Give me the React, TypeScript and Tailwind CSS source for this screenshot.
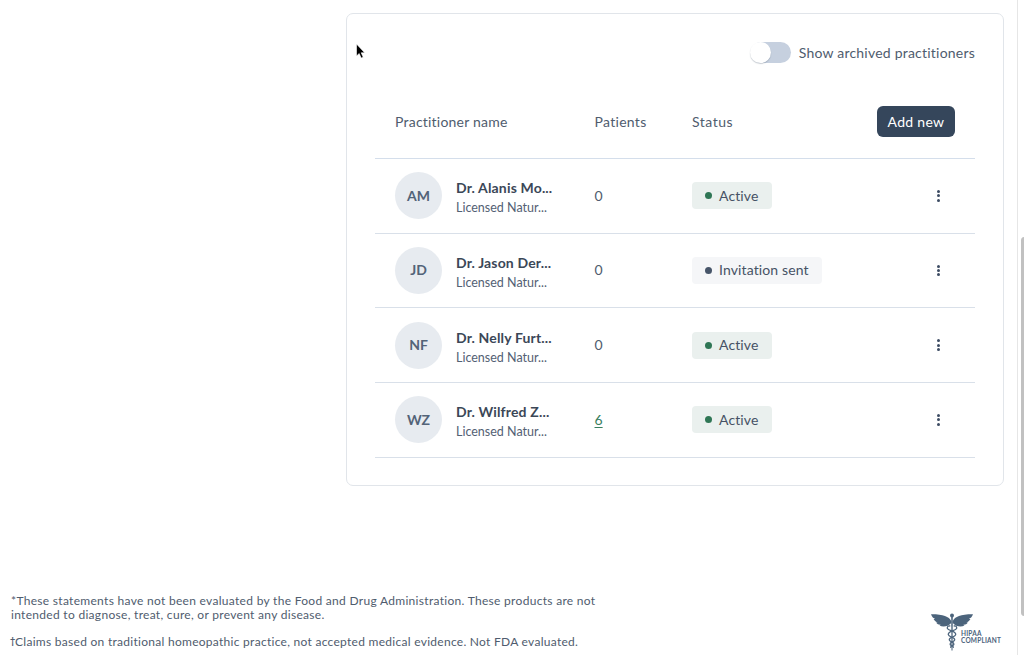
import clsx from 'clsx';

type Practitioner = {
  initials: string;
  name: string;
  title: string;
  patients: number;
  status: 'Active' | 'Invitation sent';
};

const practitioners: Practitioner[] = [
  { initials: 'AM', name: 'Dr. Alanis Mo...', title: 'Licensed Natur...', patients: 0, status: 'Active' },
  { initials: 'JD', name: 'Dr. Jason Der...', title: 'Licensed Natur...', patients: 0, status: 'Invitation sent' },
  { initials: 'NF', name: 'Dr. Nelly Furt...', title: 'Licensed Natur...', patients: 0, status: 'Active' },
  { initials: 'WZ', name: 'Dr. Wilfred Z...', title: 'Licensed Natur...', patients: 6, status: 'Active' },
];

const columns = 'grid grid-cols-[61px_138.5px_97.5px_1fr] items-center pl-[20px]';

const StatusBadge = ({ status }: { status: Practitioner['status'] }) => {
  const active = status === 'Active';

  return (
    <span
      className={clsx(
        'inline-flex h-[27px] items-center rounded-[4px] text-sm text-[#465265]',
        active ? 'w-20 bg-[#eaf0ee]' : 'w-[130px] bg-[#f5f6f8]'
      )}
    >
      <span className={clsx('ml-[13px] mr-[7px] size-[7px] rounded-full', active ? 'bg-[#2f7655]' : 'bg-[#475569]')} />
      <span className={active ? 'tracking-[0.1px]' : 'tracking-[0.12px]'}>{status}</span>
    </span>
  );
};

const PractitionerRow = ({ item }: { item: Practitioner }) => (
  <div className={clsx(columns, 'h-[74.67px] border-b border-[#d9e0e9]')}>
    <div className="flex size-[47px] items-center justify-center rounded-full bg-[#e7ebf0] text-sm font-bold text-[#536378]">
      {item.initials}
    </div>
    <div className="pt-[5px] whitespace-nowrap">
      <div className="text-sm leading-5 font-bold tracking-[0.16px] text-[#3b4757]">{item.name}</div>
      <div className="text-[12.5px] leading-5 text-[#536174]">{item.title}</div>
    </div>
    <div className="text-sm">
      {item.patients > 0 ? <a className="text-[#388060] underline underline-offset-2">{item.patients}</a> : item.patients}
    </div>
    <div className="flex items-center justify-between">
      <StatusBadge status={item.status} />
      <button className="mr-[34px] flex w-[5px] flex-col items-center gap-[1.4px]">
        <span className="size-[3px] rounded-full bg-[#3d4c63]" />
        <span className="size-[3px] rounded-full bg-[#3d4c63]" />
        <span className="size-[3px] rounded-full bg-[#3d4c63]" />
      </button>
    </div>
  </div>
);

const Caduceus = () => (
  <svg width="42" height="38" viewBox="0 0 42 38" fill="none" className="shrink-0">
    <g fill="#4c647c">
      <path d="M20.3 8C18 3.6 12 1.2 0 1.3c.9 2.8 2.6 4.1 4.2 4.6-.6.2-1 .2-1.6.1 1 2.1 2.5 3 4 3.2-.5.3-1 .4-1.5.4 1.2 1.8 2.9 2.3 4.6 2.1-.4.4-.8.6-1.3.8 3.6 1.6 8.6 1.2 11.9-2.6z" />
      <path d="M21.7 8C24 3.6 30 1.2 42 1.3c-.9 2.8-2.6 4.1-4.2 4.6.6.2 1 .2 1.6.1-1 2.1-2.5 3-4 3.2.5.3 1 .4 1.5.4-1.2 1.8-2.9 2.3-4.6 2.1.4.4.8.6 1.3.8-3.6 1.6-8.6 1.2-11.9-2.6z" />
      <circle cx="21" cy="2.4" r="2" />
      <path d="M20.2 4h1.6l-.3 33.5h-1z" />
    </g>
    <g stroke="#4c647c" strokeWidth="1.3" strokeLinecap="round">
      <path d="M18.8 13c-2.6-.4-3.5 2.4-1.3 3.5 2.8 1.5 7.8 2.3 7.2 5.2-.5 2.6-6.8 2.4-6.4 5.2.3 2.1 4.8 2 4.6 4.2-.1 1.7-3.4 1.4-3.2 3.2" />
      <path d="M23.2 13c2.6-.4 3.5 2.4 1.3 3.5-2.8 1.5-7.8 2.3-7.2 5.2.5 2.6 6.8 2.4 6.4 5.2-.3 2.1-4.8 2-4.6 4.2.1 1.7 3.4 1.4 3.2 3.2" />
    </g>
  </svg>
);

export default function App() {
  return (
    <div className="flex h-[655px] overflow-hidden bg-white font-['Lato',sans-serif] text-[#4f5c6e]">
      <main className="flex w-[1017px] flex-col">
        {/* Practitioners card */}
        <section className="mt-[13px] ml-[346px] flex h-[473px] w-[658px] flex-col rounded-[7px] border-[1.5px] border-[#e1e5ea] pr-[28px] pl-[28px]">
          <div className="mt-[27px] flex h-[22px] items-center justify-end">
            <div className="mr-2 flex h-[21px] w-10 items-center rounded-full bg-[#c6d0df]">
              <div className="-ml-px size-[21px] rounded-full bg-white shadow-[0_1px_1px_rgba(71,85,105,0.3)]" />
            </div>
            <span className="pt-0.5 text-sm tracking-[0.22px]">Show archived practitioners</span>
          </div>

          <div className="mt-[22px] flex h-[74px] items-center border-b border-[#d4deeb] pl-[20px] text-sm">
            <span className="w-[199.5px] tracking-[0.22px]">Practitioner name</span>
            <span className="w-[97.5px] tracking-[0.3px]">Patients</span>
            <span className="flex-1 tracking-[0.5px]">Status</span>
            <button className="mr-[20px] h-[31px] w-[78px] rounded-md bg-[#35465b] tracking-[0.3px] text-white">Add new</button>
          </div>

          {practitioners.map((item) => (
            <PractitionerRow key={item.initials} item={item} />
          ))}
        </section>

        {/* Footer */}
        <footer className="mt-[108px] flex justify-between pr-4 pl-[11px]">
          <div className="text-[12px] leading-[13.5px] tracking-[0.3px] whitespace-nowrap">
            <p>*These statements have not been evaluated by the Food and Drug Administration. These products are not</p>
            <p>intended to diagnose, treat, cure, or prevent any disease.</p>
            <p className="mt-[14px] tracking-[0.28px]">
              <span className="-ml-px inline-block w-[5px] -translate-y-0.5 text-[9px] leading-none font-bold">†</span>Claims based on traditional homeopathic practice, not accepted medical evidence. Not FDA evaluated.
            </p>
          </div>
          <div className="mt-[19px] flex">
            <Caduceus />
            <div className="-ml-3 mt-[17px] w-10 text-[6.5px] leading-[7px] font-bold tracking-[0.2px] text-[#4c647c]">
              <div>HIPAA</div>
              <div>COMPLIANT</div>
            </div>
          </div>
        </footer>
      </main>

      {/* Scrollbar */}
      <div className="w-[7px] border-l border-[#e6e6e6] pt-[237px]">
        <div className="ml-[3px] h-[379px] w-[7px] rounded-full bg-[#c1c1c1]" />
      </div>

      {/* Mouse pointer */}
      <svg className="absolute top-[43px] left-[355px]" width="11" height="17" viewBox="0 0 11 17">
        <path d="M1.5 1v12l2.7-2.5 2 4.6 2-.9-2-4.4h3.5z" fill="#000" stroke="#fff" strokeWidth=".6" />
      </svg>
    </div>
  );
}
